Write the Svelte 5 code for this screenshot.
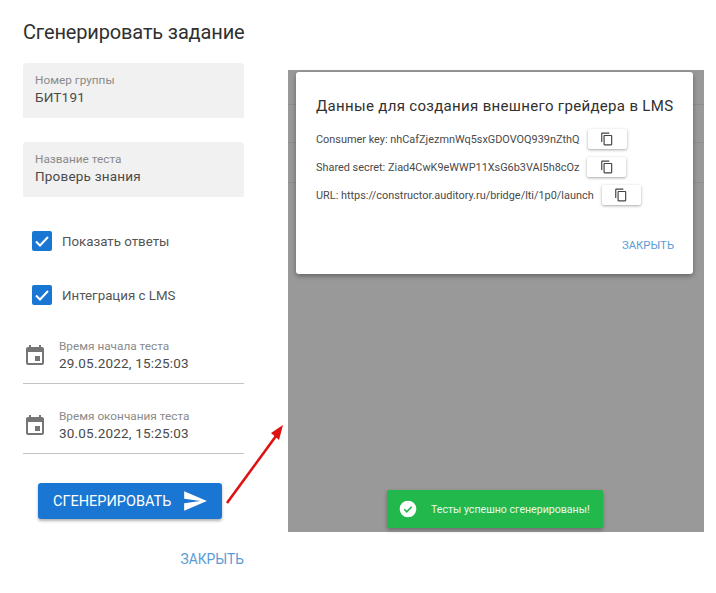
<script>
  const creds = [
    { text: 'Consumer key: nhCafZjezmnWq5sxGDOVOQ939nZthQ' },
    { text: 'Shared secret: Ziad4CwK9eWWP11XsG6b3VAI5h8cOz' },
    { text: 'URL: https://constructor.auditory.ru/bridge/lti/1p0/launch' }
  ];
</script>

<div class="page">
  <section class="form">
    <h1>Сгенерировать задание</h1>
    <div class="filled">
      <span class="label">Номер группы</span>
      <span class="value">БИТ191</span>
    </div>
    <div class="filled second">
      <span class="label">Название теста</span>
      <span class="value">Проверь знания</span>
    </div>
    <label class="check first">
      <span class="box"><svg viewBox="0 0 20 20" width="20" height="20"><path d="M4 10.5l4 4 8-8.5" fill="none" stroke="#fff" stroke-width="2"/></svg></span>
      Показать ответы
    </label>
    <label class="check next">
      <span class="box"><svg viewBox="0 0 20 20" width="20" height="20"><path d="M4 10.5l4 4 8-8.5" fill="none" stroke="#fff" stroke-width="2"/></svg></span>
      Интеграция с LMS
    </label>
    <div class="date d1">
      <svg class="cal" viewBox="0 0 24 24" width="24" height="24"><path fill="#757575" d="M17 12h-5v5h5v-5zM16 1v2H8V1H6v2H5c-1.11 0-1.99.9-1.99 2L3 19c0 1.1.89 2 2 2h14c1.1 0 2-.9 2-2V5c0-1.1-.9-2-2-2h-1V1h-2zm3 18H5V8h14v11z"/></svg>
      <div class="date-text">
        <span class="label">Время начала теста</span>
        <span class="value">29.05.2022, 15:25:03</span>
      </div>
    </div>
    <div class="date d2">
      <svg class="cal" viewBox="0 0 24 24" width="24" height="24"><path fill="#757575" d="M17 12h-5v5h5v-5zM16 1v2H8V1H6v2H5c-1.11 0-1.99.9-1.99 2L3 19c0 1.1.89 2 2 2h14c1.1 0 2-.9 2-2V5c0-1.1-.9-2-2-2h-1V1h-2zm3 18H5V8h14v11z"/></svg>
      <div class="date-text">
        <span class="label">Время окончания теста</span>
        <span class="value">30.05.2022, 15:25:03</span>
      </div>
    </div>
    <button class="generate">
      СГЕНЕРИРОВАТЬ
      <svg viewBox="0 0 24 24" width="26" height="26"><path fill="#fff" d="M2.01 21L23 12 2.01 3 2 10l15 2-15 2z"/></svg>
    </button>
    <div class="close-row"><span class="close big">ЗАКРЫТЬ</span></div>
  </section>

  <section class="shot">
    <div class="rule r1"></div>
    <div class="rule r2"></div>
    <div class="rule r3"></div>
    <div class="dialog">
      <h2>Данные для создания внешнего грейдера в LMS</h2>
      {#each creds as c}
        <div class="cred">
          <span>{c.text}</span>
          <button class="copy" aria-label="copy">
            <svg viewBox="0 0 24 24" width="14" height="14"><path fill="#444" d="M16 1H4c-1.1 0-2 .9-2 2v14h2V3h12V1zm3 4H8c-1.1 0-2 .9-2 2v14c0 1.1.9 2 2 2h11c1.1 0 2-.9 2-2V7c0-1.1-.9-2-2-2zm0 16H8V7h11v14z"/></svg>
          </button>
        </div>
      {/each}
      <div class="close-row dlg"><span class="close">ЗАКРЫТЬ</span></div>
    </div>
    <div class="toast">
      <svg viewBox="0 0 24 24" width="20" height="20"><circle cx="12" cy="12" r="10" fill="#fff"/><path d="M7.5 12.3l3 3 6-6" fill="none" stroke="#22b84c" stroke-width="2"/></svg>
      <span>Тесты успешно сгенерированы!</span>
    </div>
  </section>

  <svg class="arrow" viewBox="0 0 70 110" width="70" height="110"><line x1="2" y1="105" x2="51" y2="38" stroke="#e01010" stroke-width="2.6"/><polygon points="58,27 46,35 54,42" fill="#e01010"/></svg>
</div>

<style>
  :global(body) {
    margin: 0;
    background: #fff;
    font-family: Roboto, "Liberation Sans", sans-serif;
  }
  .page {
    position: relative;
    width: 716px;
    height: 593px;
    display: flex;
    overflow: hidden;
    background: #fff;
  }
  .form {
    width: 221px;
    margin-left: 23px;
    display: flex;
    flex-direction: column;
  }
  h1 {
    margin: 21px 0 0;
    font-size: 20px;
    line-height: 22px;
    font-weight: 400;
    color: #303030;
    letter-spacing: -0.15px;
    white-space: nowrap;
  }
  .filled {
    margin-top: 20px;
    height: 55px;
    box-sizing: border-box;
    padding: 9px 12px 0;
    background: #f1f1f1;
    border-radius: 4px 4px 0 0;
    display: flex;
    flex-direction: column;
  }
  .filled.second { margin-top: 24px; }
  .label {
    font-size: 11.8px;
    line-height: 16px;
    color: #8a8a8a;
  }
  .value {
    font-size: 13.5px;
    line-height: 18px;
    color: #4a4a4a;
    letter-spacing: 0.2px;
  }
  .check {
    display: flex;
    align-items: center;
    gap: 10px;
    height: 20px;
    margin-left: 9px;
    font-size: 13.3px;
    color: #555;
  }
  .check.first { margin-top: 34px; }
  .check.next { margin-top: 34px; }
  .box {
    width: 20px;
    height: 20px;
    background: #1976d2;
    border-radius: 2px;
    display: block;
    line-height: 0;
  }
  .date {
    display: flex;
    align-items: center;
    height: 50px;
    box-sizing: border-box;
    border-bottom: 1px solid #c4c4c4;
    padding-bottom: 6px;
  }
  .d1 { margin-top: 29px; }
  .d2 { margin-top: 20px; }
  .cal { flex: none; }
  .date-text {
    margin-left: 12px;
    display: flex;
    flex-direction: column;
  }
  .date-text .value { line-height: 19px; }
  .generate {
    margin: 29px 0 0 15px;
    width: 184px;
    height: 36px;
    border: 0;
    border-radius: 3px;
    background: #1976d2;
    color: #fff;
    font: 400 14.5px Roboto, sans-serif;
    letter-spacing: 0;
    box-shadow: 0 2px 3px rgba(0,0,0,.3);
    display: flex;
    align-items: center;
    justify-content: space-between;
    padding: 0 14px 0 15px;
  }
  .close-row {
    display: flex;
    justify-content: flex-end;
    margin-top: 32px;
  }
  .close {
    font-size: 13.8px;
    font-weight: 400;
    line-height: 16px;
    color: #5b9bd5;
  }
  .shot {
    position: relative;
    margin: 70px 0 0 44px;
    width: 416px;
    height: 462px;
    background: #999;
  }
  .rule {
    position: absolute;
    left: 0;
    right: 0;
    height: 1px;
    background: #8e8e8e;
  }
  .r1 { top: 34px; }
  .r2 { top: 72px; }
  .r3 { top: 112px; }
  .dialog {
    position: absolute;
    left: 8px;
    top: 2px;
    width: 397px;
    height: 202px;
    box-sizing: border-box;
    padding: 24px 19px 0 20px;
    background: #fff;
    border-radius: 3px;
    box-shadow: 0 2px 5px rgba(0,0,0,.35);
  }
  h2 {
    margin: 0 0 13px;
    font-size: 15px;
    line-height: 20px;
    font-weight: 400;
    color: #303030;
    letter-spacing: 0.32px;
    white-space: nowrap;
  }
  .cred {
    display: flex;
    align-items: center;
    height: 20px;
    margin-bottom: 8px;
    font-size: 10.9px;
    color: #4a4a4a;
    white-space: nowrap;
  }
  .copy {
    margin-left: 8px;
    width: 39px;
    height: 20px;
    border: 0;
    padding: 0;
    background: #fff;
    border-radius: 2px;
    box-shadow: 0 1px 3px rgba(0,0,0,.35);
    display: flex;
    align-items: center;
    justify-content: center;
  }
  .dlg { margin-top: 33px; }
  .dlg .close { font-size: 11.3px; }
  .toast {
    position: absolute;
    left: 99px;
    top: 420px;
    width: 216px;
    height: 38px;
    box-sizing: border-box;
    padding-left: 11px;
    background: #22b84c;
    border-radius: 2px;
    box-shadow: 0 2px 4px rgba(0,0,0,.3);
    display: flex;
    align-items: center;
    gap: 13px;
    color: #eaf9ee;
    font-size: 10.6px;
    white-space: nowrap;
  }
  .arrow {
    position: absolute;
    left: 225px;
    top: 398px;
  }
</style>
